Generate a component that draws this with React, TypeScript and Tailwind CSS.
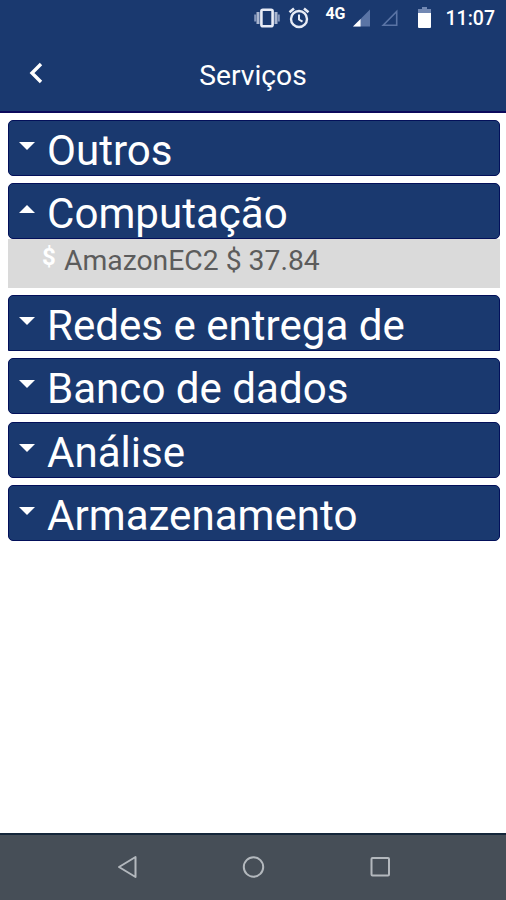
import React from 'react';

type Item = {
  name: string;
  cost: string;
};

type Category = {
  title: string;
  items: Item[];
  squareBottom?: boolean;
};

const categories: Category[] = [
  { title: 'Outros', items: [] },
  { title: 'Computação', items: [{ name: 'AmazonEC2', cost: '$ 37.84' }] },
  { title: 'Redes e entrega de', items: [], squareBottom: true },
  { title: 'Banco de dados', items: [] },
  { title: 'Análise', items: [] },
  { title: 'Armazenamento', items: [] },
];

function StatusBar() {
  return (
    <div className="flex h-9 items-center justify-end pr-[11px] text-white">
      <svg className="mr-[8px]" width="26" height="20" viewBox="0 0 26 20">
        <path d="M1.2 6.5v7M24.8 6.5v7" stroke="#8496bb" strokeWidth="2" />
        <path d="M4 4v12M22 4v12" stroke="#a9b6d0" strokeWidth="3" />
        <rect x="7.4" y="1.7" width="11.2" height="16.6" rx="1.5" fill="none" stroke="#e8ecf6" strokeWidth="2.6" />
      </svg>
      <svg className="mr-[15px]" width="22" height="22" viewBox="0 0 22 22" fill="none" stroke="#e8ecf6" strokeWidth="2.4">
        <circle cx="11" cy="12" r="8" />
        <path d="M1.5 5.2 6 1.6M20.5 5.2 16 1.6" strokeWidth="2.6" />
        <path d="M11 7.5v5l3.5 2.2" strokeWidth="2" />
      </svg>
      <span className="mr-[7px] -mt-[8px] text-[16px] leading-none font-bold">4G</span>
      <svg className="mr-[11px]" width="17" height="18" viewBox="0 0 18 18">
        <path d="M18 0v18H0z" fill="#5a74a5" />
        <path d="M8 10v8H0z" fill="#fff" />
      </svg>
      <svg className="mr-[20px]" width="17" height="18" viewBox="0 0 17 18">
        <path d="M15.7 2.4v13.9H2.2z" fill="none" stroke="#5a74a5" strokeWidth="1.6" />
      </svg>
      <svg className="mr-[15px] -mt-[2px]" width="13" height="21" viewBox="0 0 13 21">
        <path d="M4 0h5v2h4v5H0V2h4z" fill="#7288b3" />
        <path d="M0 6h13v14a1 1 0 0 1-1 1H1a1 1 0 0 1-1-1z" fill="#fff" />
      </svg>
      <span className="pt-px text-[19.5px] leading-none font-medium">11:07</span>
    </div>
  );
}

function Header() {
  return (
    <header className="h-[113px] shrink-0 border-b-2 border-[#0c0a5c] bg-[#1a396f]">
      <StatusBar />
      <div className="grid h-[75px] grid-cols-[74px_1fr_74px] items-center pt-1">
        <svg className="-mt-[5px] ml-[28px]" width="16" height="22" viewBox="0 0 16 22">
          <path d="M13 2 4 11l9 9" fill="none" stroke="#fff" strokeWidth="3.4" />
        </svg>
        <h1 className="pt-px text-center text-[28.2px] leading-none text-white">Serviços</h1>
      </div>
    </header>
  );
}

function CategoryCard({ title, items, squareBottom }: Category) {
  const open = items.length > 0;

  return (
    <section>
      <div
        className={`flex h-14 items-center border border-[#03105a] bg-[#1a396f] pl-[10px] text-white ${
          squareBottom ? 'rounded-t-[5px]' : 'rounded-[5px]'
        }`}
      >
        <svg className="-mt-[4px] mr-[12px]" width="16" height="8" viewBox="0 0 16 8">
          <path d={open ? 'M0 8h16L8 0z' : 'M0 0h16L8 8z'} fill="#fff" />
        </svg>
        <span className="pt-[6px] text-[42.1px] leading-none whitespace-nowrap">{title}</span>
      </div>
      {items.map((item) => (
        <div key={item.name} className="flex h-[48.3px] items-start bg-[#dadada] pl-[34px]">
          <span className="mt-[6px] w-[22px] text-[24px] leading-none font-bold text-white">$</span>
          <span className="mt-[8px] text-[28.3px] leading-none text-[#5c5c5c]">
            {item.name} {item.cost}
          </span>
        </div>
      ))}
    </section>
  );
}

function NavigationBar() {
  return (
    <nav className="h-[67px] shrink-0 border-t-2 border-[#14263a] bg-[#464e57]">
      <svg width="506" height="65" viewBox="0 0 506 65" fill="none" stroke="#b3b8bd" strokeWidth="2" strokeLinejoin="round">
        <path d="M135.5 22v20L119 32z" />
        <circle cx="253.5" cy="32" r="9.7" />
        <rect x="371.5" y="23" width="17.5" height="17.5" rx="1" />
      </svg>
    </nav>
  );
}

export default function App() {
  return (
    <div className="flex h-[900px] w-[506px] flex-col overflow-hidden bg-white font-[Roboto,sans-serif]">
      <Header />
      <main className="flex flex-1 flex-col gap-[7.33px] pt-[7px] pr-[6px] pl-[8px]">
        {categories.map((category) => (
          <CategoryCard key={category.title} {...category} />
        ))}
      </main>
      <NavigationBar />
    </div>
  );
}
